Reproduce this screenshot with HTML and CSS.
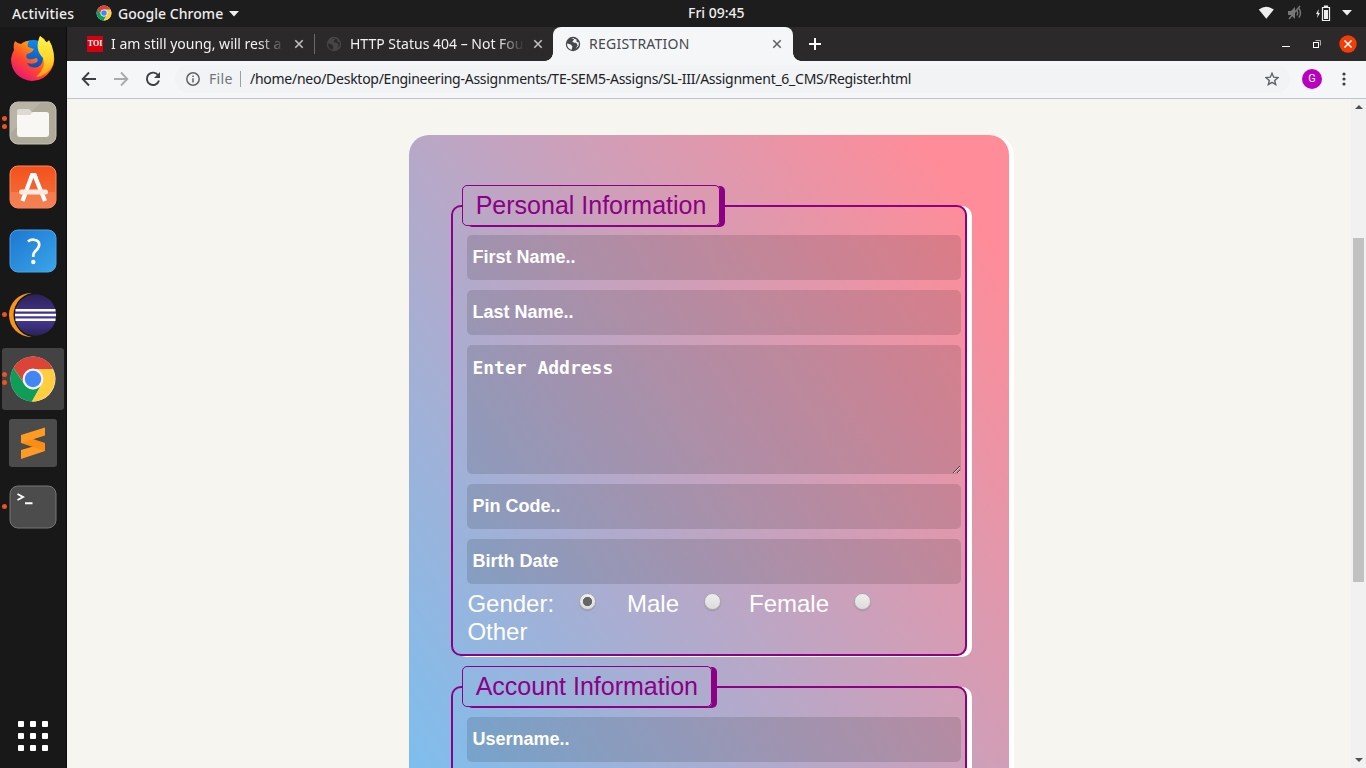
FILE: index.html
```html
<!DOCTYPE html>
<html lang="en">
<head>
<meta charset="utf-8">
<title>REGISTRATION</title>
<link rel="stylesheet" href="styles.css">
</head>
<body>
<svg width="0" height="0" class="defs">
  <defs>
    <linearGradient id="ffBody" x1="0.9" y1="0" x2="0.2" y2="1"><stop offset="0" stop-color="#ffe23a"/><stop offset=".35" stop-color="#ff980e"/><stop offset=".65" stop-color="#ff4632"/><stop offset="1" stop-color="#e8107c"/></linearGradient>
    <linearGradient id="ffBlue" x1="0" y1="0" x2="0" y2="1"><stop offset="0" stop-color="#0f8bf0"/><stop offset="1" stop-color="#123a9c"/></linearGradient>
    <linearGradient id="ffFlame" x1="0" y1="0" x2="0" y2="1"><stop offset="0" stop-color="#fff44a"/><stop offset=".55" stop-color="#ffd52f"/><stop offset="1" stop-color="#ff9a12"/></linearGradient>
    <linearGradient id="soft" x1="0" y1="0" x2="0" y2="1"><stop offset="0" stop-color="#f4511b"/><stop offset="1" stop-color="#f27444"/></linearGradient>
    <linearGradient id="help" x1="0" y1="0" x2="1" y2="1"><stop offset="0" stop-color="#1c76d2"/><stop offset="1" stop-color="#3aa6e8"/></linearGradient>
    <linearGradient id="ecl" x1="0" y1="0" x2="0" y2="1"><stop offset="0" stop-color="#2c2255"/><stop offset=".6" stop-color="#46389a"/><stop offset="1" stop-color="#2c2255"/></linearGradient>
    <symbol id="chrome" viewBox="0 0 48 48">
      <circle cx="24" cy="24" r="22.5" fill="#fff"/>
      <path d="M4.5 12.8A22.5 22.5 0 0 1 43.5 12.8L43.7 14H24A10 10 0 0 0 15.4 29Z" fill="#db4437"/>
      <path d="M4.5 12.8A22.5 22.5 0 0 0 23 46.5L32.8 29A10 10 0 0 1 15.3 29Z" fill="#0f9d58"/>
      <path d="M43.7 14A22.5 22.5 0 0 1 23 46.5L32.7 29A10 10 0 0 0 24 14Z" fill="#ffcd40"/>
      <circle cx="24" cy="24" r="10.4" fill="#f1f1f1"/><circle cx="24" cy="24" r="8.2" fill="#4285f4"/>
    </symbol>
    <symbol id="globe" viewBox="0 0 16 16">
      <circle cx="8" cy="8" r="7.2" fill="currentColor"/>
      <path d="M2 7.5 5.2 8.2 7.4 10.3 6.6 13.9C4 13.2 1.9 11 2 7.5ZM6 2.5 9.3 2 8.8 4.1 7.3 5.2 8.6 6.5 11.4 7.1 12.6 9.2 10.7 12.7 13.6 9.8 13.9 6.6 11.8 5.9 11.3 3.2" fill="var(--cut)"/>
    </symbol>
    <symbol id="x" viewBox="0 0 10 10"><path d="M1.3 1.3 8.7 8.7M8.7 1.3 1.3 8.7" stroke="currentColor" stroke-width="1.6"/></symbol>
  </defs>
</svg>

<header class="topbar">
  <span class="activities">Activities</span>
  <svg class="app-icon" width="16" height="16"><use href="#chrome"/></svg>
  <span class="app-name">Google Chrome</span>
  <svg class="caret" width="10" height="6"><path d="M0 0h10L5 5.5Z" fill="#eee"/></svg>
  <span class="clock">Fri 09:45</span>
  <div class="status">
    <svg width="17" height="14" viewBox="0 0 17 14"><path d="M.8 3.6Q8.3-2 15.8 3.6L8.3 12.8Z" fill="#eee"/></svg>
    <svg width="16" height="16" viewBox="0 0 16 16" fill="none" stroke="#777" stroke-width="1.4"><path d="M1 6h3l4-4v12l-4-4H1Z" fill="#777" stroke="none"/><path d="M10 5.5q1.5 2.5 0 5M12 3.5q3 4.5 0 9M2 14 13 1"/></svg>
    <svg width="16" height="17" viewBox="0 0 16 17"><path d="M3.7 4 1 9h1.7L2 13l3-5H3.3Z" fill="#eee"/><path d="M7.5 2.5h7v13h-7ZM9.5 1h3v1h-3Z" fill="none" stroke="#eee" stroke-width="1.2"/><path d="M9 5h4v9H9Z" fill="#eee"/></svg>
    <svg width="10" height="6"><path d="M0 0h10L5 5.5Z" fill="#eee"/></svg>
  </div>
</header>

<div class="desktop">
  <nav class="dock">
    <div class="dock-item"><svg width="46" height="46" viewBox="0 0 46 46">
      <circle cx="23" cy="22" r="18" fill="url(#ffBlue)"/>
      <path d="M5 5Q8 8 11 8 14 5 19 5Q17 8 18 11L24 13Q22 17 17 18 15 21 18 23 22 24 26 22 29 23 27 26 23 29 17 27 20 33 28 31 34 28 33 18Q28 11 30 0 34 2 36 6L39 5Q42 9 42 13 47 25 41 34 34 45 22 45C9 44 1 35 1 23Q2 17 4 14 3 9 5 5Z" fill="url(#ffBody)"/>
      <path d="M30 0 37 7 39 4Q46 16 43 28 38 40 26 41 37 31 33 22 24 13 30 0Z" fill="url(#ffFlame)"/>
    </svg></div>
    <div class="dock-item dots2"><svg width="48" height="44" viewBox="0 0 48 44"><rect x="1" y="1" width="46" height="42" rx="8" fill="#aea999" stroke="#c4c0b4"/><path d="M9 1H32L2 32V9Q2 1 9 1Z" fill="#b9b4a5"/><path d="M8 15V10Q8 8 10 8H20L23 11H37Q40 11 40 14V18H8Z" fill="#dcdad2"/><path d="M8 14H21L24 11H37Q40 11 40 14V33Q40 36 37 36H11Q8 36 8 33Z" fill="#f8f7f3"/></svg></div>
    <div class="dock-item"><svg width="48" height="44" viewBox="0 0 48 44"><rect x="1" y="1" width="46" height="42" rx="8" fill="url(#soft)" stroke="#ff8a5c"/><path d="M1.5 27H46.5V35Q46 42.5 39 42.5H9Q2 42.5 1.5 35Z" fill="#f58d63" opacity=".5"/><path d="M23.5 9 13.500 36M25 9 36 36" stroke="#fff" stroke-width="4.2" fill="none"/><path d="M22 8h5l2 5h-9Z" fill="#fff"/><rect x="10" y="24.5" width="29" height="5" rx="2.5" fill="#fde9e1"/></svg></div>
    <div class="dock-item"><svg width="48" height="44" viewBox="0 0 48 44"><rect x="1" y="1" width="46" height="42" rx="8" fill="url(#help)" stroke="#4da3e6"/><path d="M19 12.500Q22 10 26 11 31 12 30 17 29 20 26 22.500 24 24.500 24.300 28" fill="none" stroke="#fff" stroke-width="2.700"/><circle cx="24.300" cy="33" r="2.200" fill="#fff"/></svg></div>
    <div class="dock-item dot1"><svg width="50" height="46" viewBox="0 0 50 46"><circle cx="23" cy="23" r="22" fill="#f7941e"/><circle cx="28" cy="23" r="22.500" fill="#181818"/><circle cx="27.500" cy="23" r="20.700" fill="url(#ecl)"/><path d="M7.500 18.200H47.500M7 23H48M7.500 27.800H47.500" stroke="#fff" stroke-width="2.400"/></svg></div>
    <div class="dock-item dots2 active"><svg class="big" width="48" height="48"><use href="#chrome"/></svg></div>
    <div class="dock-item"><svg width="48" height="48" viewBox="0 0 48 48"><rect width="48" height="48" rx="3" fill="#4b4b4b"/><path d="M12 31 36 24V32L12 40Z" fill="#ff9b22"/><path d="M12 16 36 24V32L12 24Z" fill="#f98d16"/><path d="M12 16 36 8.500V16.500L12 24Z" fill="#ff9b22"/></svg></div>
    <div class="dock-item dot1"><svg width="48" height="44" viewBox="0 0 48 44"><rect x="1" y="1" width="46" height="42" rx="8" fill="#4c4c4c" stroke="#777"/><path d="M8.500 9 14 12 8.500 15M16 18.300H23.500" fill="none" stroke="#fff" stroke-width="1.900"/></svg></div>
    <svg class="apps" width="30" height="30" fill="#fff"><rect width="6" height="6" rx="1"/><rect x="12" width="6" height="6" rx="1"/><rect x="24" width="6" height="6" rx="1"/><rect y="12" width="6" height="6" rx="1"/><rect x="12" y="12" width="6" height="6" rx="1"/><rect x="24" y="12" width="6" height="6" rx="1"/><rect y="24" width="6" height="6" rx="1"/><rect x="12" y="24" width="6" height="6" rx="1"/><rect x="24" y="24" width="6" height="6" rx="1"/></svg>
  </nav>

  <div class="window">
    <div class="tabs">
      <div class="tab tab-first"><span class="toi">TOI</span><span class="title t1">I am still young, will rest a</span><svg class="close" width="10" height="10"><use href="#x"/></svg></div>
      <div class="tab tab-second"><svg class="fav" width="16" height="16"><use href="#globe"/></svg><span class="title t2">HTTP Status 404 – Not Fou</span><svg class="close" width="10" height="10"><use href="#x"/></svg></div>
      <div class="tab tab-active"><svg class="fav" width="16" height="16"><use href="#globe"/></svg><span class="title t3">REGISTRATION</span><svg class="close" width="10" height="10"><use href="#x"/></svg></div>
      <svg class="plus" width="12" height="12"><path d="M6 0V12M0 6H12" stroke="#fff" stroke-width="2"/></svg>
      <div class="controls">
        <svg width="8" height="12"><path d="M0 8.500H8" stroke="#fff"/></svg>
        <svg width="8" height="8" fill="none"><path d="M2.500 .5H7.500V5.500" stroke="#aaa"/><rect x=".5" y="2.500" width="5" height="5" stroke="#fff"/></svg>
        <svg width="18" height="18"><circle cx="9" cy="9" r="8.700" fill="#f43c06"/><path d="M5.500 5.500 12.500 12.500M12.500 5.500 5.500 12.500" stroke="#fff" stroke-width="1.600"/></svg>
      </div>
    </div>
    <div class="toolbar">
      <svg class="nav-back" width="16" height="16" fill="none" stroke="#3c4043" stroke-width="1.900"><path d="M15 8H2M8 1.500 1.700 8 8 14.500"/></svg>
      <svg class="nav-fwd" width="16" height="16" fill="none" stroke="#a8abae" stroke-width="1.900"><path d="M1 8H14M8 1.500 14.300 8 8 14.500"/></svg>
      <svg class="nav-reload" width="16" height="16" fill="none" stroke="#3c4043" stroke-width="1.900"><path d="M13.300 4.500A6.200 6.200 0 1 0 14 9.500"/><path d="M15 1V7H9Z" fill="#3c4043" stroke="none"/></svg>
      <div class="omnibox">
        <svg width="14" height="14" fill="none" stroke="#5f6368" stroke-width="1.500"><circle cx="7" cy="7" r="6.200"/><path d="M7 6.200V10.500M7 3.500V5"/></svg>
        <span class="scheme">File</span>
        <span class="url">/home/neo/Desktop/Engineering-Assignments/TE-SEM5-Assigns/SL-III/Assignment_6_CMS/Register.html</span>
        <svg class="star" width="14" height="14" fill="none" stroke="#5f6368" stroke-width="1.400"><path d="M7 1.300 8.700 5.200 13 5.600 9.700 8.400 10.700 12.600 7 10.400 3.300 12.600 4.300 8.400 1 5.600 5.300 5.200Z"/></svg>
      </div>
      <span class="avatar">G</span>
      <svg class="menu" width="4" height="14" fill="#3c4043"><circle cx="2" cy="2" r="1.600"/><circle cx="2" cy="7" r="1.600"/><circle cx="2" cy="12" r="1.600"/></svg>
    </div>
    <div class="viewport">
      <main class="page">
        <form class="card">
          <fieldset class="group">
            <legend>Personal Information</legend>
            <input class="field" placeholder="First Name..">
            <input class="field" placeholder="Last Name..">
            <textarea class="field area" placeholder="Enter Address"></textarea>
            <input class="field" placeholder="Pin Code..">
            <input class="field" placeholder="Birth Date">
            <div class="gender"><span class="g-label">Gender:</span><i class="radio checked"></i><span class="g-male">Male</span><i class="radio"></i><span class="g-female">Female</span><i class="radio"></i><span class="g-other">Other</span></div>
          </fieldset>
          <fieldset class="group account">
            <legend>Account Information</legend>
            <input class="field" placeholder="Username..">
            <input class="field" placeholder="Password..">
          </fieldset>
        </form>
      </main>
      <div class="scrollbar">
        <svg width="8" height="4"><path d="M0 4 4 0 8 4Z" fill="#505050"/></svg>
        <div class="thumb"></div>
        <svg class="down" width="8" height="4"><path d="M0 0 4 4 8 0Z" fill="#505050"/></svg>
      </div>
    </div>
  </div>
</div>
</body>
</html>
```
FILE: styles.css
```css
* { box-sizing: border-box; }
body { margin: 0; width: 1366px; height: 768px; overflow: hidden; display: flex; flex-direction: column; font-family: "Noto Sans", sans-serif; font-size: 14px; background: #181818; }
svg { display: block; flex: none; }
.defs { position: absolute; }
.topbar { height: 27px; flex: none; background: #1d1d1d; color: #eee; display: flex; align-items: center; position: relative; font-weight: 500; white-space: nowrap; }
.activities { margin-left: 12px; width: 84px; letter-spacing: .2px; }
.app-name { margin-left: 6px; width: 107px; letter-spacing: .05px; }
.caret { margin-left: 4px; }
.app-icon { margin-top: -1px; }
.clock { position: absolute; left: 688px; top: 3px; }
.status { margin-left: auto; margin-right: 14px; display: flex; align-items: center; gap: 12px; margin-top: -1px; }
.status svg:nth-child(-n+3) { margin-right: -1px; margin-left: 1px; }
.desktop { flex: 1; display: flex; min-height: 0; }
.dock { width: 67px; flex: none; background: #181818; display: flex; flex-direction: column; border-right: 1px solid #0c0c0c; }
.dock-item { height: 62px; width: 62px; margin: 1px 2px; display: flex; align-items: center; justify-content: center; position: relative; border-radius: 3px; flex: none; }
.active { background: #434343; }
.dot1::before, .dots2::before { content: ""; position: absolute; left: 0; top: 28px; width: 5px; height: 5px; border-radius: 50%; background: #e95420; }
.dots2::before { top: 24px; box-shadow: 0 8px 0 #e95420; }
.big { margin-bottom: 1px; }
.dock .apps { margin: auto 0 17px 18px; }
.window { flex: 1; min-width: 0; display: flex; flex-direction: column; }
.tabs { height: 34px; background: #2b292a; display: flex; align-items: center; color: #f1f1f1; --cut: #2b292a; }
.tab { height: 34px; display: flex; align-items: center; position: relative; }
.tab-first { width: 248px; padding-left: 20px; }
.tab-first::after { content: ""; position: absolute; right: 0; top: 7px; height: 20px; width: 1px; background: #6a6869; }
.tab-second { width: 238px; padding-left: 11px; }
.tab-second .fav { color: #474546; }
.tab-active { width: 240px; padding-left: 12px; background: #f5f6f8; color: #45484c; border-radius: 8px 8px 0 0; --cut: #f5f6f8; }
.tab-active::before, .tab-active::after { content: ""; position: absolute; bottom: 0; width: 8px; height: 8px; }
.tab-active::before { left: -8px; background: radial-gradient(circle at 0 0, transparent 7.500px, #f5f6f8 8px); }
.tab-active::after { right: -8px; background: radial-gradient(circle at 100% 0, transparent 7.500px, #f5f6f8 8px); }
.toi { width: 16px; height: 16px; background: #d8000c; color: #fff; font: bold 8px/16px "Liberation Serif", serif; text-align: center; }
.title { margin-left: 8px; width: 176px; padding-bottom: 2px; white-space: nowrap; font-size: 14px; }
.t1, .t2 { -webkit-mask-image: linear-gradient(90deg, #000 84%, transparent 99%); mask-image: linear-gradient(90deg, #000 84%, transparent 99%); }
.t3 { letter-spacing: .25px; }
.close { margin-left: auto; margin-right: 11px; color: #c0c0c0; }
.tab-second .close { margin-right: 10px; }
.tab-active .close { color: #5f6368; }
.plus { margin-left: 16px; }
.controls { margin-left: auto; margin-right: 9px; display: flex; align-items: center; gap: 22px; }
.controls svg:first-child { margin-right: 1px; }
.controls svg:last-child { margin-left: -4px; }
.toolbar { height: 38px; background: #f5f6f8; border-bottom: 1px solid #c2c6cc; display: flex; align-items: center; padding: 0 20px 1px 14px; }
.nav-fwd { margin-left: 16px; }
.nav-reload { margin-left: 16px; }
.omnibox { height: 28px; width: 1115px; margin-left: 14px; border-radius: 14px; background: #f1f3f4; display: flex; align-items: center; padding: 0 11px; white-space: nowrap; }
.scheme { margin-left: 9px; width: 32px; color: #70757a; border-right: 1px solid #9aa0a6; line-height: 15px; padding-bottom: 1px; letter-spacing: .3px; }
.url { margin-left: 9px; padding-bottom: 2px; color: #202124; letter-spacing: -.265px; }
.star { margin-left: auto; }
.avatar { width: 20px; height: 20px; border-radius: 50%; background: #b900bf; color: #fff; margin-left: 12px; font: 11px/20px Roboto, sans-serif; text-align: center; }
.menu { margin-left: auto; }
.viewport { flex: 1; min-height: 0; display: flex; background: #f6f5ef; }
.page { flex: 1; overflow: hidden; padding-top: 36px; }
.card { width: 600px; height: 930px; margin: 0 auto; padding: 50px 42px 0; border-radius: 20px; background: linear-gradient(to top right, #64c8ff, #ff8c98 93%); box-shadow: 5px 1px 0 #fff; }
.group { width: 516px; margin: 0 0 10px; border: 2px solid #8b0085; border-radius: 10px; padding: 9px 4px 8px 14px; box-shadow: 5px 1px 0 #fff; min-width: 0; }
.account { padding-top: 10px; }
.group legend { margin-left: -5px; padding: 5px 12.700px; height: 41px; line-height: 29px; border: 1px solid #8b0085; border-radius: 5px; box-shadow: 5px 1px 0 #8b0085; color: #8b0085; font-family: "Liberation Sans", Arial, sans-serif; font-size: 25px; }
.field { display: block; width: 494px; height: 45px; margin: 0 0 10px; padding: 0 5.400px; border: 0; border-radius: 5px; background: rgba(0, 0, 0, .12); font: bold 18px "Liberation Sans", Arial, sans-serif; outline: 0; }
.field::placeholder { color: #fff; opacity: 1; }
.area { height: 129px; padding-top: 12px; font-family: "DejaVu Sans Mono", monospace; }
.gender { margin-top: -4px; height: 56px; display: flex; flex-wrap: wrap; align-content: flex-start; color: #fff; font: 24px/28px "Liberation Sans", Arial, sans-serif; padding-left: .4px; }
.g-label { width: 111.600px; }
.g-male { width: 77px; }
.g-female { width: 105px; }
.g-other { width: 100%; }
.radio { width: 17px; height: 17px; margin: 3px 31px 0 0; border-radius: 50%; border: 1px solid #a9a9a9; background: linear-gradient(#eee, #dcdcdc); box-shadow: 0 1px 1px rgba(0, 0, 0, .15); }
.g-male + .radio { margin-right: 28px; }
.checked { background: radial-gradient(circle, #666 4.300px, transparent 5px), linear-gradient(#eee, #dcdcdc); }
.scrollbar { width: 15px; background: #f1f1f1; display: flex; flex-direction: column; align-items: center; padding: 6px 0; }
.thumb { width: 11px; height: 344px; margin-top: 129px; background: #c1c1c1; }
.down { margin-top: auto; }
```
